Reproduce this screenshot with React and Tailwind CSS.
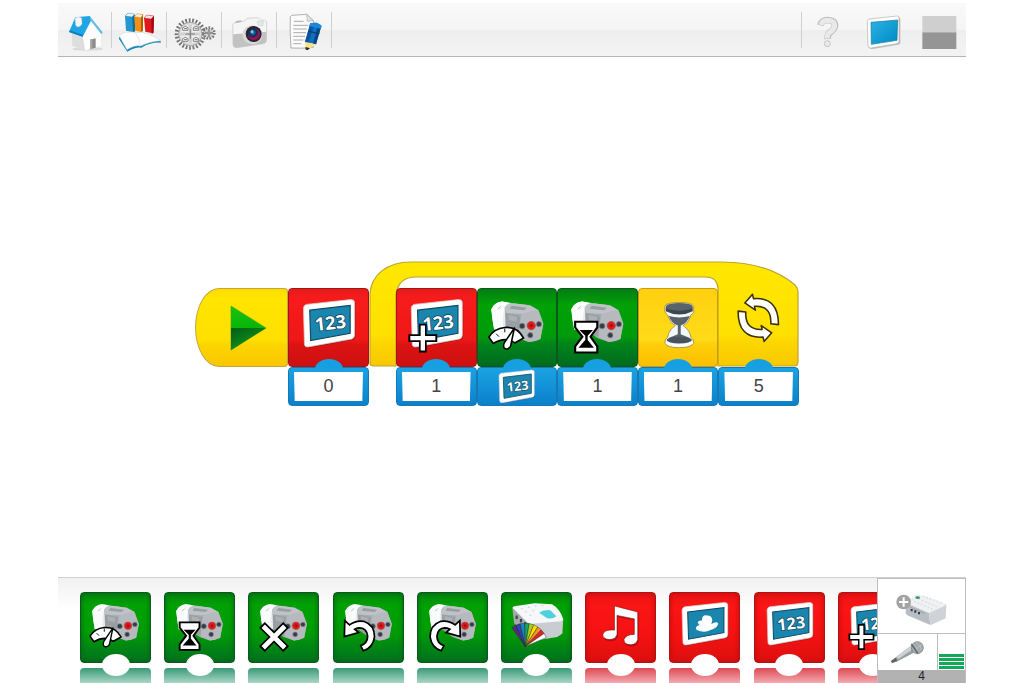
import React from "react";

/* ---------- toolbar drawings ---------- */

function HouseIcon() {
  return (
    <svg viewBox="20 24 132 132" className="size-11" aria-hidden="true">
      <ellipse cx="94" cy="147" rx="46" ry="5" fill="#000" opacity=".1" />
      <path d="M46 92 L80 104 L86 152 L48 137Z" fill="#dedede" />
      <path d="M78 106 L106 60 L136 98 L135 139 L86 152Z" fill="#fefefe" stroke="#d5d5d5" strokeWidth="1" />
      <path d="M38 96 L57 52 L100 48 L106 58 L79 110Z" fill="#1ea5e6" />
      <path d="M38 96 L79 110 L80 105 L41 91Z" fill="#0b7fc0" />
      <path d="M100 48 L139 97 L135 103 L103 62Z" fill="#62bdea" />
      <path d="M56 55 Q64 48 76 54 L77 72 Q66 88 58 76Z" fill="#f6f6f6" stroke="#c6c6c6" />
      <path d="M101 119 L118 115 L118 143 L101 148Z" fill="#8b8b8b" />
      <path d="M101 119 L108 117 L108 146 L101 148Z" fill="#a9a9a9" />
    </svg>
  );
}

function BooksIcon() {
  return (
    <svg viewBox="183 24 132 132" className="size-11" aria-hidden="true">
      <path d="M207 48 L216 39 L232 43 L230 96 L210 92Z" fill="#2397cf" />
      <path d="M207 48 L216 39 L236 42 L229 51Z" fill="#e8f4fa" stroke="#1478ab" />
      <path d="M229 51 L236 42 L238 94 L230 97Z" fill="#0c6c9c" />
      <path d="M235 50 L243 41 L260 43 L255 96 L238 92Z" fill="#f39012" />
      <path d="M235 50 L243 41 L262 44 L255 53Z" fill="#fff0dc" stroke="#c86a00" />
      <path d="M255 53 L261 44 L261 93 L255 96Z" fill="#b65c00" />
      <path d="M264 54 L272 45 L294 48 L291 100 L268 95Z" fill="#e2161d" />
      <path d="M264 54 L272 45 L294 48 L286 57Z" fill="#fbe3e3" stroke="#b00d12" />
      <path d="M286 57 L294 48 L293 98 L287 101Z" fill="#9c0b10" />
      <path d="M189 117 L214 155 Q240 140 256 143 Q285 126 315 128 L313 122 L190 111Z" fill="#1287b5" />
      <path d="M190 108 Q205 92 240 98 Q270 92 314 122 Q280 124 254 138 Q236 134 213 149Z" fill="#fff" stroke="#bcd3de" strokeWidth="1.5" />
      <path d="M238 99 Q250 112 254 137" fill="none" stroke="#cbd6dc" strokeWidth="2" />
    </svg>
  );
}

function GearIcon() {
  return (
    <svg viewBox="348 24 132 132" className="size-11" aria-hidden="true">
      <circle cx="403" cy="102" r="41" fill="none" stroke="#747474" strokeWidth="12" strokeDasharray="5.2 5.2" />
      <circle cx="403" cy="102" r="35" fill="#dcdcdc" stroke="#979797" strokeWidth="2.500" />
      <circle cx="403" cy="102" r="28" fill="#efefef" />
      <path d="M403 74V130M375 102H431" stroke="#cfcfcf" strokeWidth="9" />
      <path d="M403 88V116M389 102H417" stroke="#7c7c7c" strokeWidth="3" />
      {[[388, 86], [420, 86], [388, 119], [420, 119]].map(([x, y]) => (
        <g key={x + "-" + y}>
          <path d={`M${x - 8} ${y - 3}Q${x} ${y - 11} ${x + 8} ${y - 3}V${y + 5}H${x - 8}Z`} fill="#f8f8f8" stroke="#6f6f6f" strokeWidth="2.500" />
          <path d={`M${x - 4} ${y}H${x + 5}`} stroke="#777" strokeWidth="3" />
        </g>
      ))}
      <circle cx="459" cy="99" r="16" fill="#dcdcdc" stroke="#7a7a7a" strokeWidth="8" strokeDasharray="5 4" />
      <path d="M459 87V111M447 99H471" stroke="#777" strokeWidth="4" />
      <path d="M451 91L467 107M467 91L451 107" stroke="#aaa" strokeWidth="2" />
    </svg>
  );
}

function CameraIcon() {
  return (
    <svg viewBox="513 24 132 132" className="size-11" aria-hidden="true">
      <defs>
        <radialGradient id="lens" cx=".4" cy=".35" r=".75">
          <stop offset="0" stopColor="#0fa5d0" />
          <stop offset=".4" stopColor="#18265f" />
          <stop offset=".75" stopColor="#b11360" />
          <stop offset="1" stopColor="#2a0a20" />
        </radialGradient>
      </defs>
      <path d="M530 76 Q531 68 540 67 L563 64 L574 55 L606 53 L614 60 L626 61 Q633 62 632 72 L631 123 Q630 130 622 131 L542 143 Q532 143 531 134Z" fill="#f5f5f5" stroke="#c4c4c4" strokeWidth="2" />
      <path d="M531 103 L632 95 L631 123 Q630 130 622 131 L542 143 Q532 143 531 134Z" fill="#c2c2c2" />
      <path d="M538 69 L556 66 L556 61 L540 63Z" fill="#b9b9b9" />
      <path d="M603 64 L622 63 L621 78 L606 76Z" fill="#dceaf0" stroke="#bbb" />
      <ellipse cx="589" cy="104" rx="30" ry="28" fill="#d9d9d9" />
      <circle cx="593" cy="102" r="24" fill="#29272e" />
      <circle cx="594" cy="103" r="18" fill="url(#lens)" />
      <circle cx="588" cy="95" r="4" fill="#9be5f4" opacity=".8" />
    </svg>
  );
}

function NotesIcon() {
  return (
    <svg viewBox="678 24 132 132" className="size-11" aria-hidden="true">
      <path d="M707 46 L752 43 L772 62 L772 142 Q740 146 705 144 Q701 95 703 50Z" fill="#fbfbfb" stroke="#8c8c8c" strokeWidth="2" />
      <path d="M752 43 L754 64 L772 62Z" fill="#e3e3e3" stroke="#999" strokeWidth="1.5" />
      <path d="M714 64H743M712 76H757M712 87H752M712 98H750M712 109H747M712 120H742M712 131H736" stroke="#9a9a9a" strokeWidth="2.5" />
      <path d="M763 70 L796 78 L780 133 L747 126Z" fill="#126fc4" />
      <path d="M763 70 L775 73 L758 128 L747 126Z" fill="#0a54a0" />
      <path d="M786 76 L796 78 L780 133 L771 131Z" fill="#0b4584" />
      <path d="M762 72 Q782 60 797 78 L794 86 L760 79Z" fill="#1e86da" />
      <path d="M747 126 L780 133 L755 150 L749 148Z" fill="#f6e487" />
      <path d="M749 141 L762 145 L754 151 L748 148Z" fill="#2b2b2b" />
      <path d="M757 94 L790 101" stroke="#0a3d74" strokeWidth="4" />
    </svg>
  );
}

function HelpIcon() {
  return (
    <svg viewBox="50 24 132 132" className="size-11" aria-hidden="true">
      <path d="M90 76 Q94 60 112 60 Q135 61 134 78 Q132 89 120 96 Q111 102 112 117" fill="none" stroke="#bdbdbd" strokeWidth="20" />
      <path d="M92 75 Q96 61 112 61 Q134 62 133 78 Q131 89 119 96 Q110 102 111 115" fill="none" stroke="#e9e9e9" strokeWidth="15" />
      <circle cx="111" cy="131" r="9" fill="#e9e9e9" stroke="#bdbdbd" strokeWidth="2.5" />
    </svg>
  );
}

function DisplayIcon() {
  return (
    <svg viewBox="215 24 132 132" className="size-11" aria-hidden="true">
      <defs>
        <linearGradient id="display" x1="0" y1="0" x2="1" y2="1">
          <stop offset="0" stopColor="#2bb3e2" />
          <stop offset="1" stopColor="#0089c4" />
        </linearGradient>
      </defs>
      <path d="M234 64 Q234 58 240 57 L322 48 Q328 48 328 54 L328 125 Q328 130 322 131 L244 144 Q236 145 235 138Z" fill="#bdbdbd" transform="translate(2 3)" />
      <path d="M231 64 Q231 58 238 57 L320 48 Q326 48 326 54 L326 125 Q326 130 320 131 L242 144 Q233 145 233 138Z" fill="#fff" stroke="#b0b0b0" strokeWidth="2" />
      <path d="M242 67 L322 60 L320 121 L243 133Z" fill="url(#display)" stroke="#11799f" strokeWidth="2" />
    </svg>
  );
}

function SplitIcon() {
  return (
    <svg viewBox="380 24 132 132" className="size-11" aria-hidden="true">
      <rect x="396" y="48" width="102" height="49" fill="#cfcfcf" />
      <rect x="396" y="97" width="102" height="50" fill="#959595" />
    </svg>
  );
}

/* ---------- block drawings, on an 80 x 80 field ---------- */

function Screen({ children }) {
  return (
    <g>
      <path d="M14 20 Q14 17 17 16 L64 11 Q67 11 67 14 L67 47 Q67 50 64 51 L20 59 Q16 60 16 56Z" fill="#000" opacity=".25" transform="translate(1 2)" />
      <path d="M14 20 Q14 17 17 16 L63 11 Q67 11 67 14 L67 48 Q67 51 64 52 L20 60 Q15 61 15 57Z" fill="#fff" stroke="#d9cccc" strokeWidth=".8" />
      <path d="M20.500 22 L62.500 17 L62.500 46 L21.500 53.500Z" fill="#1b86ad" stroke="#0b4a68" strokeWidth="1.200" />
      {children}
    </g>
  );
}

function Digits() {
  return (
    <text x="42" y="42" textAnchor="middle" transform="rotate(-6 42 36)" fontSize="19" fontWeight="700" fill="#fff" stroke="#0b3f5a" strokeWidth="1.500" paintOrder="stroke" className="font-['Open_Sans','Noto_Sans',sans-serif]">
      123
    </text>
  );
}

function Plus() {
  return (
    <g fill="none">
      <path d="M26 36V66M11 51H41" stroke="#000" strokeWidth="8" />
      <path d="M26 38V64M13 51H39" stroke="#fff" strokeWidth="4.500" />
    </g>
  );
}

function Motor() {
  return (
    <g>
      <path d="M13 21 Q16 14 24 13 L34 14.500 L38 20 L32 42 L16 42 Q14 32 13 21Z" fill="#e9ecee" />
      <path d="M13 21 Q16 14 24 13 L31 14 Q24 18 25 42 L16 42 Q14 32 13 21Z" fill="#fafbfb" />
      <path d="M20 21L23 18" stroke="#a9aeb3" strokeWidth="1" />
      <path d="M27 19 Q31 14 38 15 L53 17 L62 22 L67 36 L64 52 Q58 55 52 55 L40 51 L28 42Z" fill="#a7abb0" />
      <path d="M27 19 Q31 14 38 15 L53 17 L62 22 L46 26 L28 25Z" fill="#bfc3c6" />
      <path d="M34 17.500L50 19.500L47 22L32 20.500Z" fill="#999ea2" />
      <path d="M44 27 Q53 22 62 22 L67 36 L64 52 Q58 55 52 55 L41 50Z" fill="#b6babe" />
      <path d="M28 25L43 28L41 50L28 42Z" fill="#9a9fa4" />
      <path d="M31 27L40 29L39 34L31 32Z" fill="#adb1b6" />
      <g fill="#353c46" stroke="#7d838a" strokeWidth=".8">
        <circle cx="45" cy="38.500" r="2.900" />
        <circle cx="62.500" cy="36.500" r="2.700" />
        <circle cx="53.500" cy="48" r="2.700" />
      </g>
      <circle cx="54.500" cy="38" r="4.300" fill="#e01b1b" stroke="#b34848" strokeWidth=".8" />
      <path d="M52.500 38H56.500M54.500 36V40" stroke="#a30d0d" strokeWidth="1.300" />
    </g>
  );
}

function Gauge() {
  return (
    <g stroke="#000" strokeLinejoin="round">
      <path d="M10.500 50 Q16 41 27 40 Q40 39 46.500 51 L37.500 56 Q28 49 15 56.500Z" fill="#fff" strokeWidth="1.800" />
      <path d="M18 46.500L21 49.500M27 41V45" strokeWidth="1" />
      <path d="M37 40.500 L33 59.500 Q30 64 26.500 61.500 Q25 59 26.500 56Z" fill="#fff" strokeWidth="1.600" />
    </g>
  );
}

function Timer() {
  return (
    <g>
      <path d="M17 34H40V40L33 49.500L40 59.500V66H17V59.500L24.500 49.500L17 40Z" fill="#fff" stroke="#000" strokeWidth="2.200" />
      <path d="M21.500 42.500H35.500L30 48.500V53L36.500 61H20.500L27.500 53V48.500Z" fill="#000" />
    </g>
  );
}

function Cross() {
  return (
    <g fill="none">
      <path d="M15 37L43 65M43 37L15 65" stroke="#000" strokeWidth="9.500" />
      <path d="M16.500 38.500L41.500 63.500M41.500 38.500L16.500 63.500" stroke="#fff" strokeWidth="5.500" />
    </g>
  );
}

function Turn({ flip }) {
  return (
    <g transform={flip ? "translate(61 0) scale(-1 1)" : undefined}>
      <path d="M12.500 32 L18 37 Q26 31 35 33 Q47 37 47 51 Q45 64 34 67 L31 61 Q39 58 39 50 Q38 41 30 40.500 Q27 40.500 24 42 L28.500 46 L12 50.500Z" fill="#fff" stroke="#000" strokeWidth="2" strokeLinejoin="miter" />
    </g>
  );
}

function HubLight() {
  const fan = ["#5b2a86", "#3a3fa5", "#1684d1", "#18a45b", "#a8cf28", "#ffe100", "#f7941d", "#e3202a", "#ffffff"];
  const at = (i) => {
    const a = ((-127 + i * 11.8) * Math.PI) / 180;
    return `${27 + 26 * Math.cos(a)} ${61 + 26 * Math.sin(a)}`;
  };
  return (
    <g>
      <path d="M12 17 L31 35 L32 50 L14 35Z" fill="#a4a9ae" />
      <path d="M31 35 L71 30 L70 47 L64 51 L33 56Z" fill="#c9cdd1" />
      <path d="M12 17 Q13 15 16 15 L38 12 L58 13 Q67 18 71 30 Q70 33 65 33 L31 36Z" fill="#f5f7f8" />
      <path d="M43 23 Q48 19 56 20 L63 27 Q58 31 52 29Z" fill="#4fd0dd" />
      <path d="M17 26V30M22 30V34M27 34V38" stroke="#3e4449" strokeWidth="2.500" />
      <path d="M22 18H24M30 16.500H32M38 15H40M27 22H29M35 20.500H37M32 26H34M46 14.500H48" stroke="#d3d8db" strokeWidth="1.500" />
      {fan.map((c, i) => (
        <path key={c} d={`M27 62L${at(i)}L${at(i + 1)}Z`} fill={c} stroke="#222" strokeWidth=".5" />
      ))}
    </g>
  );
}

function Note() {
  const shape = "M33 15 L60 22 V54 Q58 60 52 60 Q44 60 44 54 Q46 48 56 48 L56 30 L36 26 V48 Q34 54 27 54 Q19 53 19.500 48 Q21 42 33 43Z";
  return (
    <g>
      <path d={shape} fill="#000" opacity=".25" transform="translate(1 2)" />
      <path d={shape} fill="#fff" stroke="#8b0d0d" strokeWidth=".7" />
    </g>
  );
}

function Cloud() {
  return (
    <path d="M31 43 Q28 39 34 37 L32 34 Q34 31 37 32 Q37 25 43 26 Q49 26 49 32 L48 36 Q55 32 56 36 Q54 41 47 43 Q40 47 31 43Z" fill="#fff" />
  );
}

function Glass() {
  return (
    <g>
      <path d="M26 18 Q27 14 41 14 Q55 14 56 18 V24 Q55 26 53 27 L52 30 Q50 36 45 38 Q50 41 52 46 L53 50 Q56 52 56 56 Q54 61 41 61 Q28 61 26 56 Q26 52 29 50 L30 46 Q32 41 37 38 Q32 36 30 30 L29 27 Q26 25 26 23Z" fill="#f3f6f6" stroke="#9a8434" strokeWidth=".8" />
      <path d="M27 19 V23 Q41 30 55 23 V19 Q41 12 27 19Z" fill="#3d464f" />
      <ellipse cx="41" cy="18.500" rx="14" ry="4" fill="#59636c" />
      <path d="M30 28 Q41 31 52 28 Q49 36 42.500 38 V47 L52 51 Q41 57 30 51 L39.500 47 V38 Q33 36 30 28Z" fill="#59636c" />
      <ellipse cx="41" cy="53" rx="13" ry="3.500" fill="#48525b" />
      <path d="M27 55 Q41 61 55 55 V57 Q41 63 27 57Z" fill="#fff" />
    </g>
  );
}

function Cycle() {
  const arm = "M26 14.500 L34 5.500 L35 10 Q61 8 61 37 L53 36 Q54 17 36 18 L37 22Z";
  return (
    <g fill="#fff" stroke="#3a3000" strokeWidth="1.600" strokeLinejoin="round">
      <path d={arm} />
      <path d={arm} transform="rotate(180 40 30)" />
    </g>
  );
}

function Art({ children }) {
  return (
    <svg viewBox="0 0 80 80" className="size-full" aria-hidden="true">
      {children}
    </svg>
  );
}

/* ---------- program blocks ---------- */

const FACE = {
  red: "border-[#a31414] bg-[linear-gradient(#e31c1c,#f81b1b_12%,#ef1717_66%,#dc1313_72%,#cd1010)]",
  green: "border-[#0a5a1c] bg-[linear-gradient(#047c14,#00a106_20%,#009a0a_62%,#00861a_70%,#006a20)]",
  amber: "border-[#c99a12] bg-[linear-gradient(#ffd010,#ffdb18_66%,#fed00c_70%,#fabf00)]",
  clear: "border-transparent",
};

function Value({ label, value, children }) {
  return (
    <div className="relative h-[39px] rounded-[4px] border border-[#1679b6] bg-[linear-gradient(#1ba3e3,#0b80cb)] px-[5px] pt-1 pb-1">
      <span className="absolute -top-[9px] left-1/2 h-[10px] w-7 -translate-x-1/2 rounded-[50%_50%_0_0/100%_100%_0_0] bg-[#16a0e2]" />
      {children ?? (
        <input
          aria-label={label}
          defaultValue={value}
          className="block h-[29px] w-full bg-white text-center text-[18px] leading-[29px] text-[#444] outline-none [clip-path:polygon(0_0,100%_0,99%_100%,1%_100%)]"
        />
      )}
    </div>
  );
}

function Block({ face, art, label, value, input }) {
  return (
    <div className="min-w-0 flex-1">
      <div className={`h-[79px] rounded-[4px] border ${FACE[face]}`} role="img" aria-label={label}>
        <Art>{art}</Art>
      </div>
      <Value label={label + " value"} value={value}>
        {input}
      </Value>
    </div>
  );
}

function LoopFrame() {
  return (
    <svg viewBox="0 0 430 106" className="absolute top-0 left-0 h-[106px] w-full" preserveAspectRatio="none" aria-hidden="true">
      <defs>
        <linearGradient id="loop" x1="0" y1="0" x2="0" y2="1">
          <stop offset="0" stopColor="#ffe800" />
          <stop offset=".7" stopColor="#ffe000" />
          <stop offset=".76" stopColor="#fcd700" />
          <stop offset="1" stopColor="#f8c800" />
        </linearGradient>
      </defs>
      <path
        d="M1 102 V33 C2 14 18 1 42 1 H352 C382 1 407 8 426 24 Q429 27 429 31 V101 Q429 105 425 105 H349 V27 Q348 16 337 16 H47 Q29 16 27 34 V105 H5 Q1 105 1 102Z"
        fill="url(#loop)"
        stroke="#bfa233"
        strokeWidth="1.200"
      />
    </svg>
  );
}

function Program() {
  return (
    <section aria-label="Program" className="flex items-end pl-[137px]">
      <button aria-label="Start program" className="mb-[39px] h-[79px] w-[93px] rounded-[24px_4px_4px_24px/50%_4px_4px_50%] border border-[#c4a53a] bg-[linear-gradient(#ffdc00,#ffe500_12%,#ffdf00_66%,#fcd600_72%,#f8c600)] pl-[34px]">
        <svg viewBox="0 0 37 46" className="h-[46px] w-[37px]" aria-hidden="true">
          <defs>
            <linearGradient id="play" x1="0" y1="0" x2="0" y2="1">
              <stop offset="0" stopColor="#16c410" />
              <stop offset=".5" stopColor="#08b508" />
            </linearGradient>
            <linearGradient id="shade" x1="0" y1="0" x2=".8" y2="1">
              <stop offset="0" stopColor="#045c14" />
              <stop offset=".45" stopColor="#0b7a1a" />
              <stop offset="1" stopColor="#2fa52a" />
            </linearGradient>
          </defs>
          <path d="M1 1 L36 23 L1 45Z" fill="url(#play)" stroke="#4c9c12" strokeWidth=".6" />
          <path d="M1 23 H36 L1 45Z" fill="url(#shade)" />
        </svg>
      </button>
      <div className="flex w-[81px]">
        <Block face="red" label="Set display" value="0" art={<Screen><Digits /></Screen>} />
      </div>
      <div className="relative w-[430px] pt-[27px] pl-[27px]">
        <LoopFrame />
        <div className="relative flex">
          <Block face="red" label="Add to display" value="1" art={<><Screen><Digits /></Screen><Plus /></>} />
          <Block
            face="green"
            label="Motor power"
            art={<><Motor /><Gauge /></>}
            input={
              <svg viewBox="10 8 62 54" className="mx-auto -mt-1 h-9 w-[42px]" aria-label="Display value">
                <Screen><Digits /></Screen>
              </svg>
            }
          />
          <Block face="green" label="Motor on for" value="1" art={<><Motor /><Timer /></>} />
          <Block face="amber" label="Wait" value="1" art={<Glass />} />
          <Block face="clear" label="Repeat" value="5" art={<Cycle />} />
        </div>
      </div>
    </section>
  );
}

/* ---------- palette ---------- */

const PALETTE = [
  { name: "Motor power", tone: "green", notch: true, art: <><Motor /><Gauge /></> },
  { name: "Motor on for", tone: "green", notch: true, art: <><Motor /><Timer /></> },
  { name: "Motor off", tone: "green", art: <><Motor /><Cross /></> },
  { name: "Motor this way", tone: "green", art: <><Motor /><Turn /></> },
  { name: "Motor that way", tone: "green", art: <><Motor /><Turn flip /></> },
  { name: "Light", tone: "green", notch: true, art: <HubLight /> },
  { name: "Play sound", tone: "red", notch: true, art: <Note /> },
  { name: "Display background", tone: "red", notch: true, art: <Screen><Cloud /></Screen> },
  { name: "Display", tone: "red", notch: true, art: <Screen><Digits /></Screen> },
  { name: "Add to display", tone: "red", notch: true, art: <><Screen><Digits /></Screen><Plus /></> },
];

const TONE = {
  green: "border-[#0a5a1c] bg-[linear-gradient(#04840f,#00a104_18%,#009c06_58%,#00701f)] shadow-[inset_0_0_5px_#00601a]",
  red: "border-[#b31212] bg-[linear-gradient(#e81414,#fb1515_20%,#f51212_60%,#dc1010)] shadow-[inset_0_0_5px_#b80c0c]",
};

const MIRROR = {
  green: "bg-[linear-gradient(#3a9a78,#a9d6c6)]",
  red: "bg-[linear-gradient(#dd4a55,#f3aab0)]",
};

function Palette() {
  return (
    <ul className="grid h-full w-[842px] shrink-0 grid-cols-10">
      {PALETTE.map((b) => (
        <li key={b.name} className="relative w-[71px]">
          <button aria-label={b.name} className={`block h-[71px] w-full rounded-[4px] border ${TONE[b.tone]}`}>
            <Art>{b.art}</Art>
          </button>
          <div className={`mt-[5px] h-[15px] rounded-t-[4px] ${MIRROR[b.tone]}`} />
          {b.notch && <span className="absolute top-[62px] left-1/2 h-[22px] w-7 -translate-x-1/2 rounded-[50%] bg-white" />}
        </li>
      ))}
    </ul>
  );
}

function HubIcon() {
  return (
    <svg viewBox="399 20 261 162" className="h-[54px] w-[87px]" aria-hidden="true">
      <path d="M482 91 L552 122 L556 158 L490 130 L482 124Z" fill="#b9bdc4" />
      <path d="M552 122 L604 98 L602 138 L556 159Z" fill="#cfd2d7" />
      <path d="M482 91 L516 67 L604 97 L552 122Z" fill="#eff1f3" stroke="#d2d5d9" />
      <path d="M533 71L591 92M520 79L578 104M507 87L565 112" stroke="#dde0e3" strokeWidth="4" strokeDasharray="6 5" />
      <ellipse cx="518" cy="76" rx="7" ry="4" fill="#2da06a" />
      <path d="M500 110V117M511 114V121M522 119V126" stroke="#353941" strokeWidth="6" />
      <path d="M494 104L540 124" stroke="#8f949c" strokeWidth="2" />
      <circle cx="476" cy="89" r="22" fill="#a3a3a3" />
      <path d="M476 75V103M462 89H490" stroke="#fff" strokeWidth="6" />
    </svg>
  );
}

function MicIcon() {
  return (
    <svg viewBox="399 186 177 105" className="h-[35px] w-[59px]" aria-hidden="true">
      <path d="M438 264 L500 217 L515 235 L455 266 L441 270Z" fill="#98a0a3" />
      <path d="M455 252 L500 217 L508 226 L460 258Z" fill="#cdd3d5" />
      <path d="M438 264 L452 254 L457 263 L441 270Z" fill="#5c6366" />
      <circle cx="517" cy="224" r="18" fill="#a4abad" stroke="#73797b" strokeWidth="2" />
      <path d="M504 214 Q518 224 520 240 M512 208 Q528 218 530 232 M506 234 Q516 222 532 216" fill="none" stroke="#c2c8c9" strokeWidth="2" />
      <path d="M499 213 L519 241" stroke="#596063" strokeWidth="4" />
    </svg>
  );
}

function DevicePanel() {
  return (
    <aside aria-label="Connected hub" className="flex w-[89px] shrink-0 flex-col border-x border-t border-[#bdbdbd] bg-white">
      <button aria-label="Add hub" className="h-[55px] border-b border-[#bdbdbd]">
        <HubIcon />
      </button>
      <div className="flex h-9">
        <button aria-label="Sound sensor" className="flex-1">
          <MicIcon />
        </button>
        <div role="meter" aria-label="Sound level" aria-valuenow={4} aria-valuemin={0} aria-valuemax={10} className="flex w-7 flex-col justify-end gap-px border-l border-[#bdbdbd] px-px pb-px">
          <span className="h-[3px] bg-[#16a85a]" />
          <span className="h-[3px] bg-[#16a85a]" />
          <span className="h-[3px] bg-[#16a85a]" />
          <span className="h-[3px] bg-[#16a85a]" />
        </div>
      </div>
      <div className="flex-1 bg-[#b2b2b2] text-center text-[12px] leading-[13px] text-[#222]">4</div>
    </aside>
  );
}

/* ---------- page ---------- */

const TOOLS = [
  { name: "Lobby", icon: <HouseIcon /> },
  { name: "Library", icon: <BooksIcon /> },
  { name: "Design library", icon: <GearIcon /> },
  { name: "Camera", icon: <CameraIcon /> },
  { name: "Document", icon: <NotesIcon /> },
];

const VIEWS = [
  { name: "Help", icon: <HelpIcon /> },
  { name: "Display view", icon: <DisplayIcon /> },
  { name: "Split view", icon: <SplitIcon /> },
];

function Toolbar() {
  return (
    <header className="mt-[3px] flex h-[54px] justify-between border-b border-[#b4b4b4] bg-[linear-gradient(#f9f9f9,#f5f5f5_50%,#eeeeee_51%,#f3f3f3)]">
      <nav aria-label="Tools" className="flex items-center">
        {TOOLS.map((t) => (
          <button key={t.name} aria-label={t.name} className="flex h-9 w-[55px] items-center justify-center border-r border-[#cfcfcf] first:w-[54px]">
            {t.icon}
          </button>
        ))}
      </nav>
      <nav aria-label="Views" className="flex items-center">
        {VIEWS.map((v) => (
          <button key={v.name} aria-label={v.name} className="flex h-9 w-[55px] items-center justify-center border-[#cfcfcf] first:border-l">
            {v.icon}
          </button>
        ))}
      </nav>
    </header>
  );
}

export default function App() {
  return (
    <div className="flex min-h-screen flex-col overflow-hidden bg-white px-[58px] font-['Liberation_Sans',Arial,sans-serif]">
      <Toolbar />
      <main className="flex-1 pt-[204px]">
        <Program />
      </main>
      <footer className="flex h-[106px] border-t border-[#d0d0d0] bg-[linear-gradient(#f1f1f1,#fff_30%)]">
        <div className="min-w-0 flex-1 overflow-hidden pt-[14px] pl-[22px]">
          <Palette />
        </div>
        <DevicePanel />
      </footer>
    </div>
  );
}
